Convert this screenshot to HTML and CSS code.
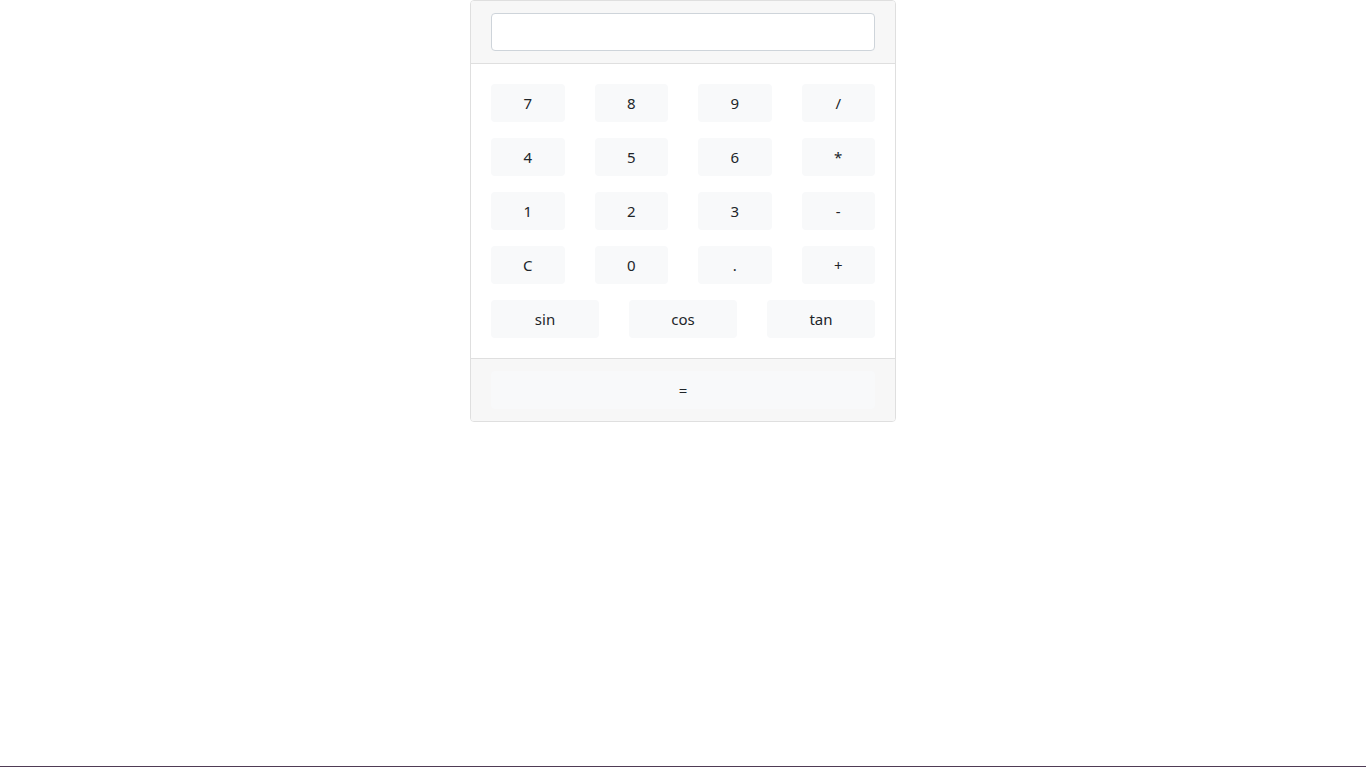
FILE: index.html
```html
<!DOCTYPE html>
<html>
<head>
<meta charset="utf-8">
<link rel="stylesheet" href="styles.css">
</head>
<body>
<div class="card">
  <div class="card-header">
    <input class="display" type="text">
  </div>
  <div class="card-body">
    <div class="row four">
      <button class="btn">7</button><button class="btn">8</button><button class="btn">9</button><button class="btn">/</button>
    </div>
    <div class="row four">
      <button class="btn">4</button><button class="btn">5</button><button class="btn">6</button><button class="btn">*</button>
    </div>
    <div class="row four">
      <button class="btn">1</button><button class="btn">2</button><button class="btn">3</button><button class="btn">-</button>
    </div>
    <div class="row four">
      <button class="btn">C</button><button class="btn">0</button><button class="btn">.</button><button class="btn">+</button>
    </div>
    <div class="row three">
      <button class="btn">sin</button><button class="btn">cos</button><button class="btn">tan</button>
    </div>
  </div>
  <div class="card-footer">
    <button class="btn wide">=</button>
  </div>
</div>
<div class="taskline"></div>
</body>
</html>
```
FILE: styles.css
```css
html, body {
  margin: 0;
  padding: 0;
  height: 100%;
}
body {
  font-family: "Noto Sans", "Open Sans", sans-serif;
  font-size: 16px;
  color: #212529;
  background: #fff;
  display: flex;
  flex-direction: column;
  align-items: center;
}
.card {
  width: 426px;
  box-sizing: border-box;
  border: 1px solid #dfdfdf;
  border-radius: 4px;
  background: #fff;
}
.card-header {
  background: #f7f7f7;
  padding: 12px 20px;
  border-bottom: 1px solid #dfdfdf;
  border-radius: 3px 3px 0 0;
}
.display {
  display: block;
  width: 100%;
  box-sizing: border-box;
  height: 38px;
  border: 1px solid #ced4da;
  border-radius: 4px;
  background: #fff;
  margin: 0;
  padding: 6px 12px;
  font: inherit;
}
.card-body {
  padding: 20px;
  display: flex;
  flex-direction: column;
  gap: 16px;
}
.row {
  display: grid;
  column-gap: 30px;
}
.four { grid-template-columns: repeat(4, 1fr); }
.three { grid-template-columns: repeat(3, 1fr); }
.btn {
  height: 38px;
  border: 0;
  border-radius: 4px;
  background: #f8f9fa;
  color: #212529;
  font-family: "Noto Sans", "Open Sans", sans-serif;
  font-size: 15px;
  padding: 0;
  margin: 0;
}
.card-footer {
  background: #f7f7f7;
  padding: 12px 20px;
  border-top: 1px solid #dfdfdf;
  border-radius: 0 0 3px 3px;
}
.wide {
  display: block;
  width: 100%;
}
.taskline {
  margin-top: auto;
  width: 100%;
  height: 1px;
  background: #4f3b55;
}
```
